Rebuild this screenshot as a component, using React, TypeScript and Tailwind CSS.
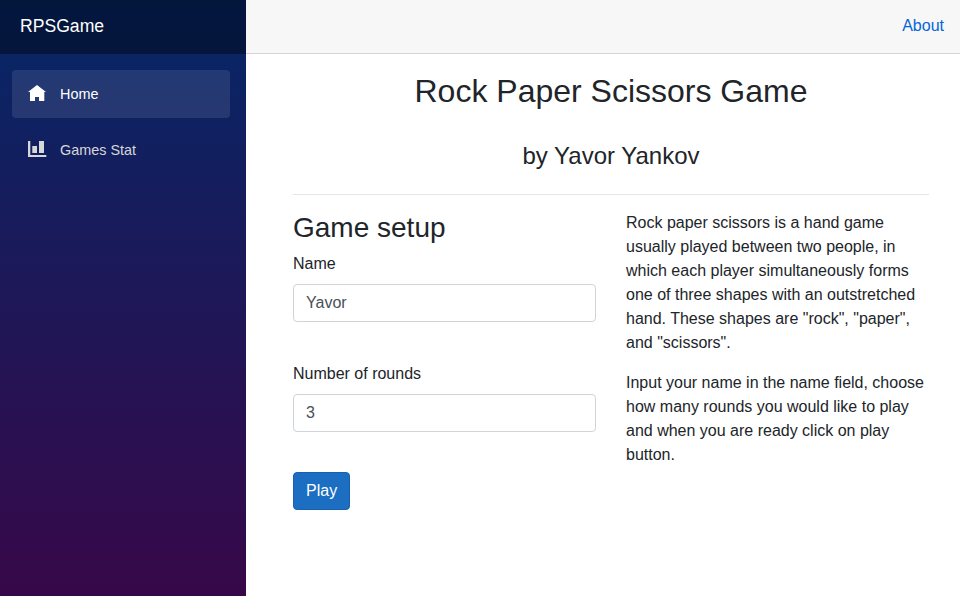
import React from "react";

function HomeIcon() {
  return (
    <svg width="18" height="18" viewBox="0 0 18 18" fill="currentColor">
      <path d="M9 0L0 7h2v9h5v-4h4v4h5.3V7H18L9 0z" />
    </svg>
  );
}

function ChartIcon() {
  return (
    <svg width="19" height="18" viewBox="0 0 19 18" fill="currentColor">
      <path d="M0 0v16h18.3v-2H2.3V0zM11 0v12h5V0zM4.3 5v7H9V5z" />
    </svg>
  );
}

function Field({ label, value }: { label: string; value: string }) {
  return (
    <div className="mb-10">
      <label className="mb-2 block">{label}</label>
      <input
        className="block h-[38px] w-full rounded border border-[#ced4da] bg-white px-3 py-1.5 text-[#495057] outline-none"
        defaultValue={value}
      />
    </div>
  );
}

export default function App() {
  return (
    <div className="flex h-screen overflow-hidden bg-white font-['Liberation_Sans',Arial,sans-serif] text-base leading-6 text-[#212529]">
      <aside className="w-[246px] shrink-0 bg-[linear-gradient(180deg,rgb(5,39,103)_0%,#3a0647_70%)] bg-[length:100%_900px]">
        <div className="flex h-[54px] items-center bg-black/40 pb-0.5 pl-5 text-[17.6px] text-white">RPSGame</div>
        <nav className="flex flex-col gap-2 pt-4 pr-4 pl-3 text-[14.4px]">
          <a className="flex h-12 items-center rounded bg-white/10 pl-4 text-white">
            <span className="w-8"><HomeIcon /></span>Home
          </a>
          <a className="flex h-12 items-center rounded pl-4 text-[#d7d7d7]">
            <span className="w-8"><ChartIcon /></span>Games Stat
          </a>
        </nav>
      </aside>
      <main className="min-w-0 flex-1">
        <header className="flex h-[54px] items-center justify-end border-b border-[#d6d5d5] bg-[#f7f7f7] pr-4 pb-0.5">
          <a className="text-[#0366d6]">About</a>
        </header>
        <div className="pt-[18px] pr-[31px] pl-[47px]">
          <h1 className="text-center text-[32px] leading-[38px]">Rock Paper Scissors Game</h1>
          <h2 className="mt-[31px] text-center text-2xl leading-[29px]">by Yavor Yankov</h2>
          <hr className="mt-6 mb-4 border-[#e5e5e5]" />
          <div className="grid grid-cols-2 gap-[30px]">
            <section>
              <h3 className="mb-2 text-[28px] leading-[33px]">Game setup</h3>
              <Field label="Name" value="Yavor" />
              <Field label="Number of rounds" value="3" />
              <button className="h-[38px] rounded border border-[#1861ac] bg-[#1b6ec2] px-3 text-white">Play</button>
            </section>
            <section>
              <p className="mb-4">Rock paper scissors is a hand game usually played between two people, in which each player simultaneously forms one of three shapes with an outstretched hand. These shapes are "rock", "paper", and "scissors".</p>
              <p>Input your name in the name field, choose how many rounds you would like to play and when you are ready click on play button.</p>
            </section>
          </div>
        </div>
      </main>
    </div>
  );
}
